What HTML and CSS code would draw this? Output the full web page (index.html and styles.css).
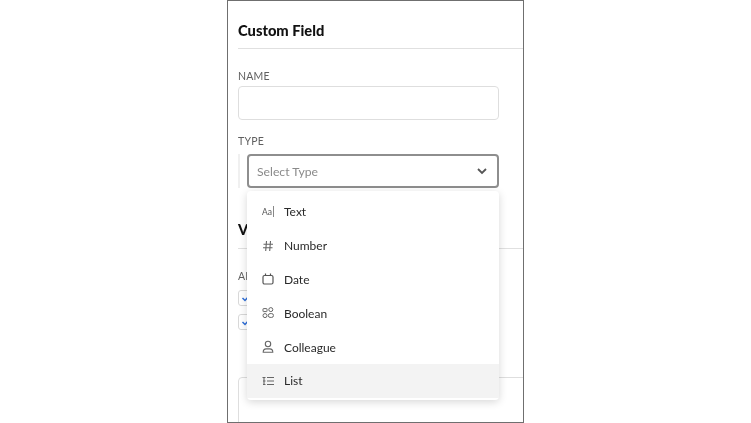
FILE: index.html
```html
<!DOCTYPE html>
<html lang="en">
<head>
<meta charset="utf-8">
<title>Custom Field</title>
<link rel="stylesheet" href="styles.css">
</head>
<body>
<main class="phone">
  <div class="content">
    <h1 class="title">Custom Field</h1>
    <div class="section">
      <div class="label">NAME</div>
      <div class="input"></div>
      <div class="label label-type">TYPE</div>
      <div class="select-row">
        <div class="select-bar"></div>
        <div class="select">
          <span class="placeholder">Select Type</span>
          <svg class="chevron" viewBox="0 0 12 8" width="12" height="8"><path d="M2 2l4 4 4-4" fill="none" stroke="#555" stroke-width="1.8"/></svg>
        </div>
      </div>
    </div>
    <h2 class="title title-second">V</h2>
    <div class="section section-second">
      <div class="label">AD</div>
      <div class="check-row">
        <span class="check"><svg viewBox="0 0 12 12" width="12" height="12"><path d="M2.5 6l2.5 2.5 4.5-5" fill="none" stroke="#2f6fd8" stroke-width="1.5"/></svg></span>
      </div>
      <div class="check-row">
        <span class="check"><svg viewBox="0 0 12 12" width="12" height="12"><path d="M2.5 6l2.5 2.5 4.5-5" fill="none" stroke="#2f6fd8" stroke-width="1.5"/></svg></span>
      </div>
      <div class="box"></div>
    </div>
  </div>

  <ul class="menu">
    <li class="item">
      <span class="icon icon-text">Aa<i class="caret"></i></span>
      <span>Text</span>
    </li>
    <li class="item">
      <span class="icon"><svg viewBox="0 0 14 14" width="14" height="14"><path d="M5.5 2l-.8 10M9.5 2l-.8 10M2.5 5.2h9.5M2 8.8h9.5" fill="none" stroke="#666" stroke-width="1.1"/></svg></span>
      <span>Number</span>
    </li>
    <li class="item">
      <span class="icon"><svg viewBox="0 0 14 14" width="14" height="14"><rect x="2" y="3.5" width="10" height="8.5" rx="1.5" fill="none" stroke="#555" stroke-width="1.2"/><path d="M4.5 1.5v2.4M9.5 1.5v2.4" stroke="#555" stroke-width="1.2"/></svg></span>
      <span>Date</span>
    </li>
    <li class="item">
      <span class="icon"><svg viewBox="0 0 14 14" width="14" height="14"><g fill="none" stroke="#666" stroke-width="1"><rect x="2" y="2.6" width="4" height="3" rx=".5"/><circle cx="9.8" cy="3.6" r="2"/><circle cx="4" cy="9.6" r="2"/><rect x="7.4" y="7.6" width="5" height="3.8" rx="1.7"/></g></svg></span>
      <span>Boolean</span>
    </li>
    <li class="item">
      <span class="icon"><svg viewBox="0 0 14 14" width="14" height="14"><g fill="none" stroke="#666" stroke-width="1.1"><circle cx="7" cy="4" r="2.7"/><path d="M2.2 12.3c0-2.2 1.5-3.4 3-3.4h3.6c1.5 0 3 1.2 3 3.4z"/></g></svg></span>
      <span>Colleague</span>
    </li>
    <li class="item item-active">
      <span class="icon"><svg viewBox="0 0 14 14" width="14" height="14"><path d="M1.5 3.5h3M3 3.5v7M2 7h2.5M2 10.5h2.5M6 3.5h7M6 7h7M6 10.5h7" fill="none" stroke="#666" stroke-width="1.1"/></svg></span>
      <span>List</span>
    </li>
  </ul>
</main>
</body>
</html>
```

FILE: styles.css
```css
* {
  box-sizing: border-box;
}

html,
body {
  margin: 0;
  height: 423px;
  overflow: hidden;
  background: #fff;
}

body {
  font-family: Lato, "Noto Sans", sans-serif;
  color: #1c1c1c;
}

.phone {
  position: relative;
  width: 297px;
  height: 423px;
  margin-left: 227px;
  border: 1px solid #6f6f6f;
  overflow: hidden;
  filter: blur(0.45px);
}

.content {
  padding-top: 20px;
}

.title {
  margin: 0 0 0 10px;
  height: 27px;
  font-size: 14.7px;
  line-height: 19px;
  font-weight: 900;
  color: #111;
}

.section {
  margin-left: 10px;
  border-top: 1px solid #e0e0e0;
  padding-top: 20px;
}

.label {
  font-size: 10.5px;
  line-height: 14px;
  letter-spacing: 0.2px;
  color: #5f5f5f;
}

.input {
  width: 261px;
  height: 34px;
  margin-top: 3px;
  border: 1px solid #dedede;
  border-radius: 4px;
}

.label-type {
  margin-top: 14px;
}

.select-row {
  display: flex;
  align-items: stretch;
  height: 34px;
  margin-top: 6px;
}

.select-bar {
  width: 2px;
  margin-right: 7px;
  background: #f0f0f0;
}

.select {
  display: flex;
  align-items: center;
  justify-content: space-between;
  width: 252px;
  padding: 0 9px 0 8px;
  border: 2px solid #8e8e8e;
  border-radius: 4px;
  font-size: 12.2px;
  color: #8a8a8a;
}

.title-second {
  margin-top: 32px;
  height: 28px;
}

.check-row {
  display: flex;
  align-items: center;
  height: 16px;
  margin-top: 7px;
}

.check-row + .check-row {
  margin-top: 8px;
}

.check {
  display: flex;
  align-items: center;
  justify-content: center;
  width: 15px;
  height: 16px;
  border: 1px solid #d8d8d8;
  border-radius: 3px;
}

.box {
  width: 320px;
  height: 80px;
  margin-top: 47px;
  border: 1px solid #dedede;
  border-radius: 4px;
}

.menu {
  position: absolute;
  left: 19px;
  top: 190px;
  width: 252px;
  margin: 0;
  padding: 4px 0 2px;
  list-style: none;
  background: #fff;
  border-radius: 4px;
  box-shadow: 0 2px 8px rgba(0, 0, 0, 0.16);
}

.item {
  display: flex;
  align-items: center;
  gap: 9px;
  height: 33.8px;
  padding-left: 14px;
  font-size: 12px;
  color: #2a2a2a;
}

.item-active {
  background: #f3f3f3;
}

.icon {
  display: flex;
  align-items: center;
  justify-content: center;
  width: 14px;
  height: 14px;
}

.icon-text {
  font-size: 8.5px;
  color: #555;
}

.caret {
  display: block;
  width: 1px;
  height: 11px;
  margin-left: 1px;
  background: #888;
}
```
